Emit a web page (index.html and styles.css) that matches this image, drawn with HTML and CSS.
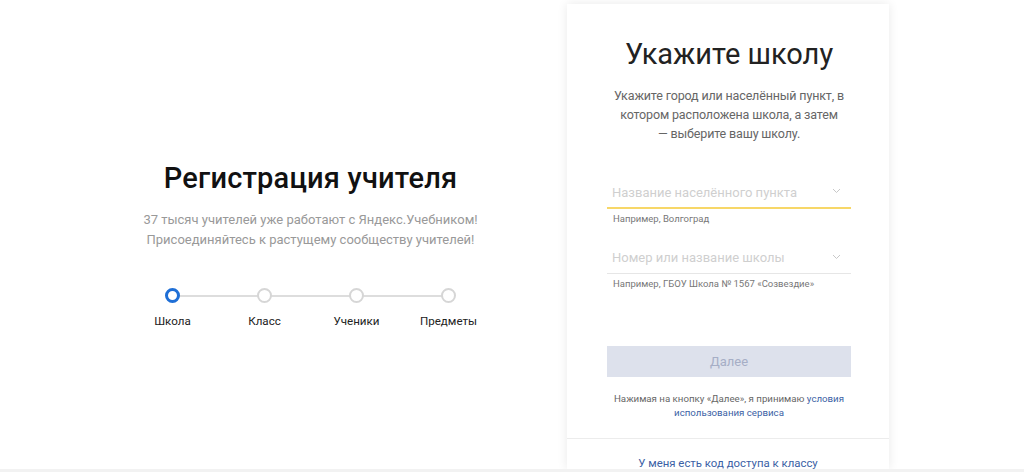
FILE: index.html
```html
<!DOCTYPE html>
<html lang="ru">
<head>
<meta charset="utf-8">
<title>Регистрация учителя</title>
<link rel="stylesheet" href="styles.css">
</head>
<body>
<div class="page">
  <section class="intro">
    <h1 class="intro-title">Регистрация учителя</h1>
    <p class="intro-text">37 тысяч учителей уже работают с Яндекс.Учебником!<br>Присоединяйтесь к растущему сообществу учителей!</p>
    <div class="steps">
      <div class="step active"><span class="dot"></span><span class="step-label">Школа</span></div>
      <div class="step"><span class="dot"></span><span class="step-label">Класс</span></div>
      <div class="step"><span class="dot"></span><span class="step-label">Ученики</span></div>
      <div class="step"><span class="dot"></span><span class="step-label">Предметы</span></div>
    </div>
  </section>
  <section class="card">
    <div class="card-body">
      <h2 class="card-title">Укажите школу</h2>
      <p class="card-text">Укажите город или населённый пункт, в<br>котором расположена школа, а затем<br>— выберите вашу школу.</p>
      <div class="field focused">
        <span class="placeholder">Название населённого пункта</span>
        <svg class="chev" width="9" height="6" viewBox="0 0 9 6"><path d="M1 1l3.5 3.5L8 1" fill="none" stroke="#c8c8c8" stroke-width="1"/></svg>
      </div>
      <div class="hint">Например, Волгоград</div>
      <div class="field">
        <span class="placeholder">Номер или название школы</span>
        <svg class="chev" width="9" height="6" viewBox="0 0 9 6"><path d="M1 1l3.5 3.5L8 1" fill="none" stroke="#c8c8c8" stroke-width="1"/></svg>
      </div>
      <div class="hint">Например, ГБОУ Школа № 1567 «Созвездие»</div>
      <button class="next" type="button">Далее</button>
      <p class="terms">Нажимая на кнопку «Далее», я принимаю <a href="#">условия</a><br><a href="#">использования сервиса</a></p>
    </div>
    <div class="card-footer"><a href="#">У меня есть код доступа к классу</a></div>
  </section>
</div>
</body>
</html>
```

FILE: styles.css
```css
* { box-sizing: border-box; }
html, body { margin: 0; padding: 0; }
body {
  width: 1024px;
  height: 472px;
  overflow: hidden;
  background: #fff;
  font-family: Roboto, "Noto Sans", Arial, sans-serif;
  color: #222;
  border-bottom: 3px solid #f2f2f2;
}
.page {
  display: flex;
  height: 469px;
}
.intro {
  flex: 0 0 567px;
  padding-left: 54px;
  display: flex;
  flex-direction: column;
  align-items: center;
  justify-content: flex-start;
  padding-top: 160px;
}
.intro-title {
  margin: 0;
  font-size: 29px;
  font-weight: 500;
  line-height: 36px;
  color: #111;
  letter-spacing: 0.2px;
}
.intro-text {
  margin: 14px 0 0;
  font-size: 13px;
  line-height: 20px;
  color: #999;
  text-align: center;
}
.steps {
  margin-top: 37px;
  display: grid;
  grid-template-columns: repeat(4, 92px);
  position: relative;
}
.steps::before {
  content: "";
  position: absolute;
  left: 46px;
  right: 46px;
  top: 8px;
  height: 2px;
  background: #ddd;
}
.step {
  display: flex;
  flex-direction: column;
  align-items: center;
  position: relative;
}
.dot {
  width: 15px;
  height: 15px;
  border-radius: 50%;
  border: 2px solid #d6d6d6;
  background: #fff;
  margin-top: 1px;
}
.step.active .dot {
  border: 3px solid #1f6fd6;
}
.step-label {
  margin-top: 10px;
  font-size: 11.6px;
  line-height: 16px;
  color: #222;
}
.card {
  flex: 0 0 322px;
  margin-top: 4px;
  background: #fff;
  box-shadow: 0 0 10px rgba(0, 0, 0, 0.09);
  display: flex;
  flex-direction: column;
}
.card-body {
  padding: 32px 38px 0 40px;
  display: flex;
  flex-direction: column;
}
.card-title {
  margin: 0;
  font-size: 29px;
  font-weight: 400;
  line-height: 36px;
  text-align: center;
  color: #222;
}
.card-text {
  margin: 14px -6px 0;
  font-size: 12.5px;
  line-height: 19px;
  color: #666;
  text-align: center;
  white-space: nowrap;
  letter-spacing: -0.15px;
}
.field {
  margin-top: 32px;
  height: 34px;
  display: flex;
  align-items: center;
  justify-content: space-between;
  padding: 0 10px 0 5px;
  border-bottom: 1px solid #e6e6e6;
}
.field.focused {
  border-bottom: 2px solid #f7d768;
}
.field + .hint + .field { margin-top: 14px; }
.placeholder {
  font-size: 13px;
  color: #cfcfcf;
  padding-top: 2px;
}
.hint {
  margin-top: 3px;
  padding-left: 6px;
  font-size: 9.5px;
  line-height: 14px;
  color: #777;
}
.next {
  margin-top: 55px;
  height: 31px;
  border: 0;
  background: #dde1ec;
  color: #a6aec6;
  font-family: inherit;
  font-size: 13px;
  padding: 0;
}
.terms {
  margin: 15px -6px 0;
  font-size: 9.7px;
  line-height: 14px;
  color: #666;
  text-align: center;
  white-space: nowrap;
}
.terms a, .card-footer a {
  color: #3b5fa5;
  text-decoration: none;
}
.card-footer {
  margin-top: 18px;
  border-top: 1px solid #ececec;
  padding-top: 16px;
  text-align: center;
  font-size: 11.4px;
  line-height: 16px;
}
```
